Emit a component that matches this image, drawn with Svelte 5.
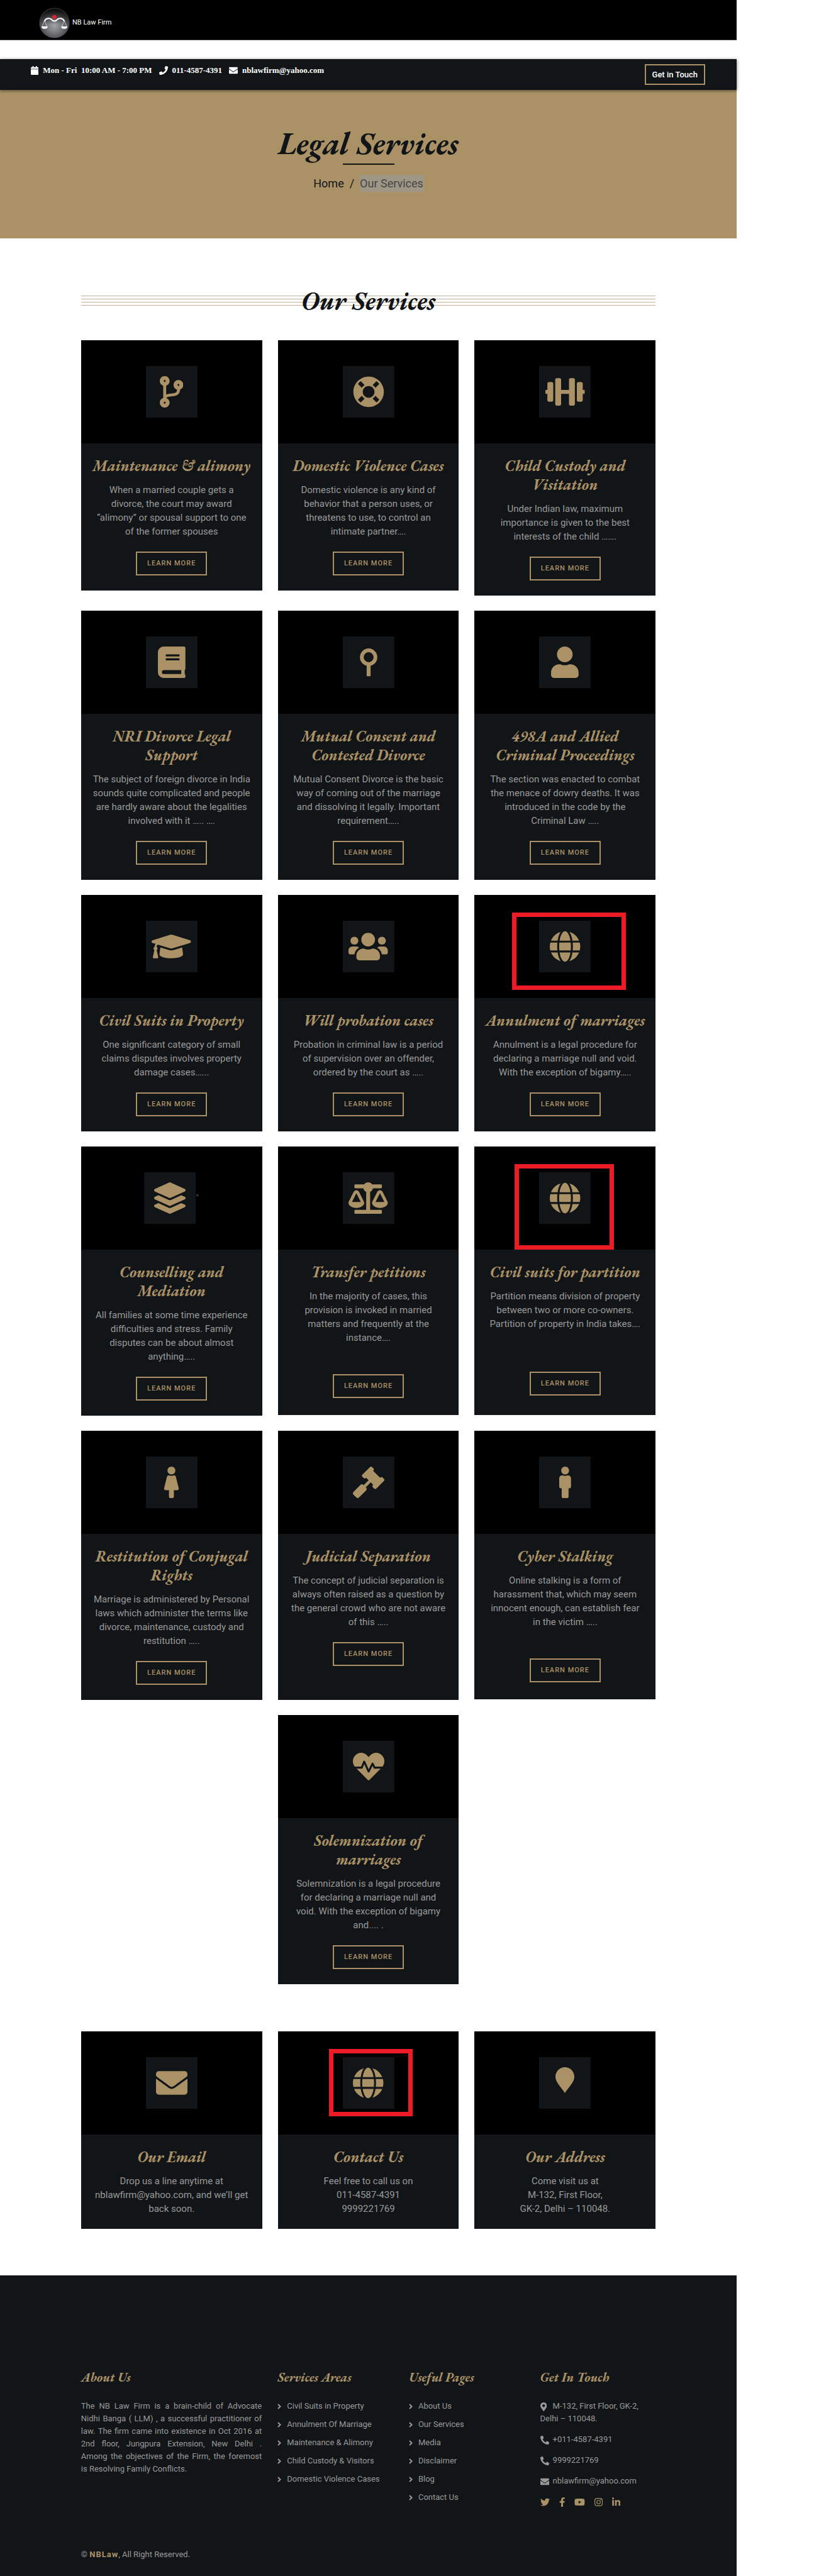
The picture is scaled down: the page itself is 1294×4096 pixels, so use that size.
<script>
  const icons = {
    branch: { w: 384, d: 'M384 144c0-44.2-35.8-80-80-80s-80 35.8-80 80c0 36.4 24.3 67.1 57.5 76.8-.6 16.1-4.2 28.5-11 36.9-15.4 19.2-49.3 22.4-85.2 25.7-28.2 2.6-57.4 5.4-81.3 16.9v-144c32.5-10.2 56-40.5 56-76.3 0-44.2-35.8-80-80-80S0 35.8 0 80c0 35.8 23.5 66.1 56 76.3v199.3C23.5 365.9 0 396.2 0 432c0 44.2 35.8 80 80 80s80-35.8 80-80c0-34-21.2-63.1-51.2-74.6 3.1-5.2 7.8-9.8 14.9-13.4 16.2-8.2 40.4-10.4 66.1-12.8 42.2-3.9 90-8.4 118.2-43.4 14-17.4 21.1-39.8 21.6-67.9 31.6-10.8 54.4-40.7 54.4-75.9zM80 64c8.8 0 16 7.2 16 16s-7.2 16-16 16-16-7.2-16-16 7.2-16 16-16zm0 384c-8.8 0-16-7.2-16-16s7.2-16 16-16 16 7.2 16 16-7.2 16-16 16zm224-320c8.8 0 16 7.2 16 16s-7.2 16-16 16-16-7.2-16-16 7.2-16 16-16z' },
    ring: { w: 512, d: 'M256 8C119.033 8 8 119.033 8 256s111.033 248 248 248 248-111.033 248-248S392.967 8 256 8zm173.696 119.559l-63.399 63.399c-10.987-18.559-26.67-34.252-45.255-45.255l63.399-63.399a218.396 218.396 0 0 1 45.255 45.255zM256 352c-53.019 0-96-42.981-96-96s42.981-96 96-96 96 42.981 96 96-42.981 96-96 96zM127.559 82.304l63.399 63.399c-18.559 10.987-34.252 26.67-45.255 45.255l-63.399-63.399a218.372 218.372 0 0 1 45.255-45.255zM82.304 384.441l63.399-63.399c10.987 18.559 26.67 34.252 45.255 45.255l-63.399 63.399a218.396 218.396 0 0 1-45.255-45.255zm302.137 45.255l-63.399-63.399c18.559-10.987 34.252-26.67 45.255-45.255l63.399 63.399a218.403 218.403 0 0 1-45.255 45.255z' },
    dumbbell: { w: 640, d: 'M104 96H56c-13.3 0-24 10.7-24 24v104H8c-4.4 0-8 3.6-8 8v48c0 4.4 3.6 8 8 8h24v104c0 13.3 10.7 24 24 24h48c13.3 0 24-10.7 24-24V120c0-13.3-10.7-24-24-24zm528 128h-24V120c0-13.3-10.7-24-24-24h-48c-13.3 0-24 10.7-24 24v272c0 13.3 10.7 24 24 24h48c13.3 0 24-10.7 24-24V288h24c4.4 0 8-3.6 8-8v-48c0-4.4-3.6-8-8-8zM456 32h-48c-13.3 0-24 10.7-24 24v168H256V56c0-13.3-10.7-24-24-24h-48c-13.3 0-24 10.7-24 24v400c0 13.3 10.7 24 24 24h48c13.3 0 24-10.7 24-24V288h128v168c0 13.3 10.7 24 24 24h48c13.3 0 24-10.7 24-24V56c0-13.3-10.7-24-24-24z' },
    book: { w: 448, d: 'M448 360V24c0-13.3-10.7-24-24-24H96C43 0 0 43 0 96v320c0 53 43 96 96 96h328c13.3 0 24-10.7 24-24v-16c0-7.5-3.5-14.3-8.9-18.7-4.2-15.4-4.2-59.3 0-74.7 5.4-4.3 8.9-11.1 8.9-18.6zM128 134c0-3.3 2.7-6 6-6h212c3.3 0 6 2.7 6 6v20c0 3.3-2.7 6-6 6H134c-3.3 0-6-2.7-6-6v-20zm0 64c0-3.3 2.7-6 6-6h212c3.3 0 6 2.7 6 6v20c0 3.3-2.7 6-6 6H134c-3.3 0-6-2.7-6-6v-20zm253.4 250H96c-17.7 0-32-14.3-32-32 0-17.6 14.4-32 32-32h285.4c-1.9 17.1-1.9 46.9 0 64z' },
    pin: { w: 512, d: 'M256 31a143 143 0 0 0-32 282v162q0 8 8 8h48q8 0 8-8V313a143 143 0 0 0-32-282zm0 62a81 81 0 1 1 0 162 81 81 0 0 1 0-162z' },
    user: { w: 448, d: 'M224 256c70.7 0 128-57.3 128-128S294.7 0 224 0 96 57.3 96 128s57.3 128 128 128zm89.6 32h-16.7c-22.2 10.2-46.9 16-72.9 16s-50.6-5.8-72.9-16h-16.7C60.2 288 0 348.2 0 422.4V464c0 26.5 21.5 48 48 48h352c26.5 0 48-21.5 48-48v-41.6c0-74.2-60.2-134.4-134.4-134.4z' },
    cap: { w: 640, d: 'M622.34 153.2L343.4 67.5c-15.2-4.67-31.6-4.67-46.79 0L17.66 153.2c-23.54 7.23-23.54 38.36 0 45.59l48.63 14.94c-10.67 13.19-17.23 29.28-17.88 46.9C38.78 266.15 32 276.11 32 288c0 10.78 5.68 19.85 13.86 25.65L20.33 428.53C18.11 438.52 25.71 448 35.94 448h56.11c10.24 0 17.84-9.48 15.62-19.47L82.14 313.65C90.32 307.85 96 298.78 96 288c0-11.57-6.47-21.25-15.66-26.87.76-15.02 8.44-28.3 20.69-36.72L296.6 284.5c9.06 2.78 26.44 6.25 46.79 0l278.95-85.7c23.55-7.24 23.55-38.36 0-45.6zM352.79 315.09c-28.53 8.76-52.84 3.92-65.59 0l-145.02-44.55L128 384c0 35.35 85.96 64 192 64s192-28.65 192-64l-14.18-113.47-145.03 44.56z' },
    users: { w: 640, d: 'M96 224c35.3 0 64-28.7 64-64s-28.7-64-64-64-64 28.7-64 64 28.7 64 64 64zm448 0c35.3 0 64-28.7 64-64s-28.7-64-64-64-64 28.7-64 64 28.7 64 64 64zm32 32h-64c-17.6 0-33.5 7.1-45.1 18.6 40.3 22.1 68.9 62 75.1 109.4h66c17.7 0 32-14.3 32-32v-32c0-35.3-28.7-64-64-64zm-256 0c61.9 0 112-50.1 112-112S381.9 32 320 32 208 82.1 208 144s50.1 112 112 112zm76.8 32h-8.3c-20.8 10-43.9 16-68.5 16s-47.6-6-68.5-16h-8.3C179.6 288 128 339.6 128 403.2V432c0 26.5 21.5 48 48 48h288c26.5 0 48-21.5 48-48v-28.8c0-63.6-51.6-115.2-115.2-115.2zm-223.7-13.4C161.5 263.1 145.6 256 128 256H64c-35.3 0-64 28.7-64 64v32c0 17.7 14.3 32 32 32h65.9c6.3-47.4 34.9-87.3 75.2-109.4z' },
    globe: { w: 496, d: 'M336.5 160C322 70.7 287.8 8 248 8s-74 62.7-88.5 152h177zM152 256c0 22.2 1.2 43.5 3.3 64h185.3c2.1-20.5 3.3-41.8 3.3-64s-1.2-43.5-3.3-64H155.3c-2.1 20.5-3.3 41.8-3.3 64zm324.7-96c-28.6-67.9-86.5-120.4-158-141.6 24.4 33.8 41.2 84.7 50 141.6h108zM177.2 18.4C105.8 39.6 47.8 92.1 19.3 160h108c8.7-56.9 25.5-107.8 49.9-141.6zM487.4 192H372.7c2.1 21 3.3 42.5 3.3 64s-1.2 43-3.3 64h114.6c5.5-20.5 8.6-41.8 8.6-64s-3.1-43.5-8.5-64zM120 256c0-21.5 1.2-43 3.3-64H8.6C3.2 212.5 0 233.8 0 256s3.2 43.5 8.6 64h114.6c-2-21-3.2-42.5-3.2-64zm39.5 96c14.5 89.3 48.7 152 88.5 152s74-62.7 88.5-152h-177zm159.3 141.6c71.4-21.2 129.4-73.7 158-141.6h-108c-8.8 56.9-25.6 107.8-50 141.6zM19.3 352c28.6 67.9 86.5 120.4 158 141.6-24.4-33.8-41.2-84.7-50-141.6h-108z' },
    layers: { w: 512, d: 'M12.41 148.02l232.94 105.67c6.8 3.09 14.49 3.09 21.29 0l232.94-105.67c16.55-7.51 16.55-32.52 0-40.03L266.65 2.31a25.607 25.607 0 0 0-21.29 0L12.41 107.98c-16.55 7.51-16.55 32.53 0 40.04zm487.18 88.28l-58.09-26.33-161.64 73.27c-7.56 3.43-15.59 5.17-23.86 5.17s-16.29-1.74-23.86-5.17L70.51 209.97l-58.1 26.33c-16.55 7.5-16.55 32.5 0 40l232.94 105.59c6.8 3.08 14.49 3.08 21.29 0L499.59 276.3c16.55-7.5 16.55-32.5 0-40zm0 127.8l-57.87-26.23-161.86 73.37c-7.56 3.43-15.59 5.17-23.86 5.17s-16.29-1.74-23.86-5.17L70.29 337.87 12.41 364.1c-16.55 7.5-16.55 32.5 0 40l232.94 105.59c6.8 3.08 14.49 3.08 21.29 0L499.59 404.1c16.55-7.5 16.55-32.5 0-40z' },
    scale: { w: 640, d: 'M256 336h-.02c0-16.18 1.34-8.73-85.05-181.51-17.65-35.29-68.19-35.36-85.87 0C-2.06 328.75.02 320.33.02 336H0c0 44.18 57.31 80 128 80s128-35.82 128-80zM128 176l72 144H56l72-144zm511.98 160c0-16.18 1.34-8.73-85.05-181.51-17.65-35.29-68.19-35.36-85.87 0-87.12 174.26-85.04 165.84-85.04 181.51H384c0 44.18 57.31 80 128 80s128-35.82 128-80h-.02zM440 320l72-144 72 144H440zm88 128H352V153.25c23.51-10.29 41.16-31.48 46.39-57.25H528c8.84 0 16-7.16 16-16V48c0-8.84-7.16-16-16-16H383.64C369.04 12.68 346.09 0 320 0s-49.04 12.68-63.64 32H112c-8.84 0-16 7.16-16 16v32c0 8.84 7.16 16 16 16h129.61c5.23 25.76 22.87 46.96 46.39 57.25V448H112c-8.84 0-16 7.16-16 16v32c0 8.84 7.16 16 16 16h416c8.84 0 16-7.16 16-16v-32c0-8.84-7.16-16-16-16z' },
    female: { w: 256, d: 'M128 0c35.346 0 64 28.654 64 64s-28.654 64-64 64c-35.346 0-64-28.654-64-64S92.654 0 128 0m119.283 354.179l-48-192A24 24 0 0 0 176 144h-11.36c-22.711 10.443-49.59 10.894-73.28 0H80a24 24 0 0 0-23.283 18.179l-48 192C4.935 369.305 16.383 384 32 384h56v104c0 13.255 10.745 24 24 24h32c13.255 0 24-10.745 24-24V384h56c15.591 0 27.071-14.671 23.283-29.821z' },
    gavel: { w: 512, d: 'M504.971 199.362l-22.627-22.627c-9.373-9.373-24.569-9.373-33.941 0l-5.657 5.657L329.608 69.255l5.657-5.657c9.373-9.373 9.373-24.569 0-33.941L312.638 7.029c-9.373-9.373-24.569-9.373-33.941 0L154.246 131.48c-9.373 9.373-9.373 24.569 0 33.941l22.627 22.627c9.373 9.373 24.569 9.373 33.941 0l5.657-5.657 39.598 39.598-81.04 81.04-5.657-5.657c-12.497-12.497-32.758-12.497-45.255 0L9.373 412.118c-12.497 12.497-12.497 32.758 0 45.255l45.255 45.255c12.497 12.497 32.758 12.497 45.255 0l114.745-114.745c12.497-12.497 12.497-32.758 0-45.255l-5.657-5.657 81.04-81.04 39.598 39.598-5.657 5.657c-9.373 9.373-9.373 24.569 0 33.941l22.627 22.627c9.373 9.373 24.569 9.373 33.941 0l124.451-124.451c9.372-9.372 9.372-24.568 0-33.941z' },
    male: { w: 192, d: 'M96 0c35.346 0 64 28.654 64 64s-28.654 64-64 64-64-28.654-64-64S60.654 0 96 0m48 144h-11.36c-22.711 10.443-49.59 10.894-73.28 0H48c-26.51 0-48 21.49-48 48v136c0 13.255 10.745 24 24 24h16v136c0 13.255 10.745 24 24 24h64c13.255 0 24-10.745 24-24V352h16c13.255 0 24-10.745 24-24V192c0-26.51-21.49-48-48-48z' },
    heart: { w: 512, d: 'M320.2 243.8l-49.7 99.4c-6 12.1-23.4 11.7-28.9-.6l-56.9-126.3-30 71.7H60.6l182.5 186.5c7.1 7.3 18.6 7.3 25.7 0L451.4 288H342.3l-22.1-44.2zM473.7 73.9l-2.4-2.5c-51.5-52.6-135.8-52.6-187.4 0L256 100l-27.9-28.5c-51.5-52.7-135.9-52.7-187.4 0l-2.4 2.4C-10.4 123.7-12.5 203 31 256h102.4l35.9-86.2c5.4-12.9 23.6-13.1 29.2-.4l58.2 129.3 49-97.9c5.9-11.8 22.7-11.8 28.6 0l27.6 55.2H481c43.5-53 41.4-132.3-7.3-182.1z' },
    envelope: { w: 512, d: 'M502.3 190.8c3.9-3.1 9.7-.2 9.7 4.7V400c0 26.5-21.5 48-48 48H48c-26.5 0-48-21.5-48-48V195.6c0-5 5.7-7.8 9.7-4.7 22.4 17.4 52.1 39.5 154.1 113.6 21.1 15.4 56.7 47.8 92.2 47.6 35.7.3 72-32.8 92.3-47.6 102-74.1 131.6-96.3 154-113.7zM256 320c23.2.4 56.6-29.2 73.4-41.4 132.7-96.3 142.8-104.7 173.4-128.7 5.8-4.5 9.2-11.5 9.2-18.9v-19c0-26.5-21.5-48-48-48H48c-26.5 0-48 21.5-48 48v19c0 7.4 3.4 14.3 9.2 18.9 30.6 23.9 40.7 32.4 173.4 128.7 16.8 12.2 50.2 41.8 73.4 41.4z' },
    drop: { w: 512, d: 'M256 0C170 0 102 70 102 158c0 84 92 164 154 262 62-98 154-178 154-262C410 70 342 0 256 0z' },
    calendar: { w: 448, d: 'M12 192h424c6.6 0 12 5.4 12 12v260c0 26.5-21.5 48-48 48H48c-26.5 0-48-21.5-48-48V204c0-6.6 5.4-12 12-12zm436-44v-36c0-26.5-21.5-48-48-48h-48V12c0-6.6-5.4-12-12-12h-40c-6.6 0-12 5.4-12 12v52H160V12c0-6.6-5.4-12-12-12h-40c-6.6 0-12 5.4-12 12v52H48C21.5 64 0 85.5 0 112v36c0 6.6 5.4 12 12 12h424c6.6 0 12-5.4 12-12z' },
    phone: { w: 512, d: 'M493.4 24.6l-104-24c-11.3-2.6-22.9 3.3-27.5 13.9l-48 112c-4.2 9.8-1.4 21.3 6.9 28l60.6 49.6c-36 76.7-98.9 140.5-177.2 177.2l-49.6-60.6c-6.8-8.3-18.2-11.1-28-6.9l-112 48C3.9 366.5-2 378.1.6 389.4l24 104C27.1 504.2 36.7 512 48 512c256.1 0 464-207.5 464-464 0-11.2-7.7-20.9-18.6-23.4z' },
    phoneAlt: { w: 512, d: 'M18.6 24.6l104-24c11.3-2.6 22.9 3.3 27.5 13.9l48 112c4.2 9.8 1.4 21.3-6.9 28l-60.6 49.6c36 76.7 98.9 140.5 177.2 177.2l49.6-60.6c6.8-8.3 18.2-11.1 28-6.9l112 48c10.7 4.7 16.6 16.3 14 27.6l-24 104C484.9 504.2 475.3 512 464 512 207.9 512 0 304.5 0 48 0 36.8 7.7 27.1 18.6 24.6z' },
    marker: { w: 384, d: 'M172.268 501.67C26.97 291.031 0 269.413 0 192 0 85.961 85.961 0 192 0s192 85.961 192 192c0 77.413-26.97 99.031-172.268 309.67-9.535 13.774-29.93 13.773-39.464 0zM192 272c44.183 0 80-35.817 80-80s-35.817-80-80-80-80 35.817-80 80 35.817 80 80 80z' },
    twitter: { w: 512, d: 'M459.37 151.716c.325 4.548.325 9.097.325 13.645 0 138.72-105.583 298.558-298.558 298.558-59.452 0-114.68-17.219-161.137-47.106 8.447.974 16.568 1.299 25.34 1.299 49.055 0 94.213-16.568 130.274-44.832-46.132-.975-84.792-31.188-98.112-72.772 6.498.974 12.995 1.624 19.818 1.624 9.421 0 18.843-1.3 27.614-3.573-48.081-9.747-84.143-51.98-84.143-102.985v-1.299c13.969 7.797 30.214 12.67 47.431 13.319-28.264-18.843-46.781-51.005-46.781-87.391 0-19.492 5.197-37.36 14.294-52.954 51.655 63.675 129.3 105.258 216.365 109.807-1.624-7.797-2.599-15.918-2.599-24.04 0-57.828 46.782-104.934 104.934-104.934 30.213 0 57.502 12.67 76.67 33.137 23.715-4.548 46.456-13.32 66.599-25.34-7.798 24.366-24.366 44.833-46.132 57.827 21.117-2.273 41.584-8.122 60.426-16.243-14.292 20.791-32.161 39.308-52.628 54.253z' },
    facebook: { w: 320, d: 'M279.14 288l14.22-92.66h-88.91v-60.13c0-25.35 12.42-50.06 52.24-50.06h40.42V6.26S260.43 0 225.36 0c-73.22 0-121.08 44.38-121.08 124.72v70.62H22.89V288h81.39v224h100.17V288z' },
    youtube: { w: 576, d: 'M549.655 124.083c-6.281-23.65-24.787-42.276-48.284-48.597C458.781 64 288 64 288 64S117.22 64 74.629 75.486c-23.497 6.322-42.003 24.947-48.284 48.597-11.412 42.867-11.412 132.305-11.412 132.305s0 89.438 11.412 132.305c6.281 23.65 24.787 41.5 48.284 47.821C117.22 448 288 448 288 448s170.78 0 213.371-11.486c23.497-6.321 42.003-24.171 48.284-47.821 11.412-42.867 11.412-132.305 11.412-132.305s0-89.438-11.412-132.305zm-317.51 213.508V175.185l142.739 81.205-142.739 81.201z' },
    instagram: { w: 448, d: 'M130 32h188c72 0 130 58 130 130v188c0 72-58 130-130 130H130C58 480 0 422 0 350V162C0 90 58 32 130 32zm4 42c-52 0-92 40-92 92v180c0 52 40 92 92 92h180c52 0 92-40 92-92V166c0-52-40-92-92-92zm90 67a115 115 0 1 1 0 230 115 115 0 0 1 0-230zm0 40a75 75 0 1 0 0 150 75 75 0 0 0 0-150zm120-72a27 27 0 1 1 0 54 27 27 0 0 1 0-54z' },
    linkedin: { w: 448, d: 'M100.28 448H7.4V148.9h92.88zM53.79 108.1C24.09 108.1 0 83.5 0 53.8a53.79 53.79 0 0 1 107.58 0c0 29.7-24.1 54.3-53.79 54.3zM447.9 448h-92.68V302.4c0-34.7-.7-79.2-48.29-79.2-48.29 0-55.69 37.7-55.69 76.7V448h-92.78V148.9h89.08v40.8h1.3c12.4-23.5 42.69-48.3 87.88-48.3 94 0 111.28 61.9 111.28 142.3V448z' }
  };

  const services = [
    { icon: 'branch', title: 'Maintenance & alimony', text: 'When a married couple gets a\ndivorce, the court may award\n“alimony” or spousal support to one\nof the former spouses' },
    { icon: 'ring', title: 'Domestic Violence Cases', text: 'Domestic violence is any kind of\nbehavior that a person uses, or\nthreatens to use, to control an\nintimate partner….' },
    { icon: 'dumbbell', title: 'Child Custody and\nVisitation', text: 'Under Indian law, maximum\nimportance is given to the best\ninterests of the child …….' },
    { icon: 'book', title: 'NRI Divorce Legal\nSupport', text: 'The subject of foreign divorce in India\nsounds quite complicated and people\nare hardly aware about the legalities\ninvolved with it ….. ….' },
    { icon: 'pin', title: 'Mutual Consent and\nContested Divorce', text: 'Mutual Consent Divorce is the basic\nway of coming out of the marriage\nand dissolving it legally. Important\nrequirement…..' },
    { icon: 'user', title: '498A and Allied\nCriminal Proceedings', text: 'The section was enacted to combat\nthe menace of dowry deaths. It was\nintroduced in the code by the\nCriminal Law …..' },
    { icon: 'cap', title: 'Civil Suits in Property', text: 'One significant category of small\nclaims disputes involves property\ndamage cases…...' },
    { icon: 'users', title: 'Will probation cases', text: 'Probation in criminal law is a period\nof supervision over an offender,\nordered by the court as …..' },
    { icon: 'globe', title: 'Annulment of marriages', text: 'Annulment is a legal procedure for\ndeclaring a marriage null and void.\nWith the exception of bigamy…..', mark: 'wide' },
    { icon: 'layers', title: 'Counselling and\nMediation', text: 'All families at some time experience\ndifficulties and stress. Family\ndisputes can be about almost\nanything…..', after: '"' },
    { icon: 'scale', title: 'Transfer petitions', text: 'In the majority of cases, this\nprovision is invoked in married\nmatters and frequently at the\ninstance….', space: 'drop-1' },
    { icon: 'globe', title: 'Civil suits for partition', text: 'Partition means division of property\nbetween two or more co-owners.\nPartition of property in India takes….', space: 'drop-2', mark: 'tall' },
    { icon: 'female', title: 'Restitution of Conjugal\nRights', text: 'Marriage is administered by Personal\nlaws which administer the terms like\ndivorce, maintenance, custody and\nrestitution …..' },
    { icon: 'gavel', title: 'Judicial Separation', text: 'The concept of judicial separation is\nalways often raised as a question by\nthe general crowd who are not aware\nof this …..', space: 'deep' },
    { icon: 'male', title: 'Cyber Stalking', text: 'Online stalking is a form of\nharassment that, which may seem\ninnocent enough, can establish fear\nin the victim …..', space: 'drop-1' },
    { icon: 'heart', title: 'Solemnization of\nmarriages', text: 'Solemnization is a legal procedure\nfor declaring a marriage null and\nvoid. With the exception of bigamy\nand.... .', space: 'middle' }
  ];

  const contacts = [
    { icon: 'envelope', title: 'Our Email', text: 'Drop us a line anytime at\nnblawfirm@yahoo.com, and we’ll get\nback soon.' },
    { icon: 'globe', title: 'Contact Us', text: 'Feel free to call us on\n011-4587-4391\n9999221769', mark: 'small' },
    { icon: 'drop', title: 'Our Address', text: 'Come visit us at\nM-132, First Floor,\nGK-2, Delhi – 110048.' }
  ];

  const about = [
    'The NB Law Firm is a brain-child of Advocate',
    'Nidhi Banga ( LLM) , a successful practitioner of',
    'law. The firm came into existence in Oct 2016 at',
    '2nd floor, Jungpura Extension, New Delhi .',
    'Among the objectives of the Firm, the foremost',
    'is Resolving Family Conflicts.'
  ];
  const areas = ['Civil Suits in Property', 'Annulment Of Marriage', 'Maintenance & Alimony', 'Child Custody & Visitors', 'Domestic Violence Cases'];
  const pages = ['About Us', 'Our Services', 'Media', 'Disclaimer', 'Blog', 'Contact Us'];
  const social = ['twitter', 'facebook', 'youtube', 'instagram', 'linkedin'];
</script>

{#snippet icon(name)}
  <svg class="icon" viewBox="0 0 {icons[name].w} 512" aria-hidden="true"><path d={icons[name].d} fill-rule={name === 'instagram' || name === 'pin' ? 'evenodd' : 'nonzero'} /></svg>
{/snippet}

{#snippet card(item, button)}
  <article class="card {item.space ?? ''}">
    <div class="cover">
      <div class="tile">{@render icon(item.icon)}</div>
      {#if item.after}<span class="after">{item.after}</span>{/if}
      {#if item.mark}<div class="mark {item.mark}"></div>{/if}
    </div>
    <div class="body">
      <h3>{item.title}</h3>
      <p>{item.text}</p>
      {#if button}<a class="more" href="#more">LEARN MORE</a>{/if}
    </div>
  </article>
{/snippet}

{#snippet links(items)}
  <ul>
    {#each items as item}
      <li>
        <a href="#page">
          <svg class="chevron" viewBox="0 0 6 9" aria-hidden="true"><path d="M1 1l3.6 3.5L1 8" /></svg>{item}
        </a>
      </li>
    {/each}
  </ul>
{/snippet}

<div class="page">
  <header class="brand">
    <svg class="logo" viewBox="0 0 50 50" role="img" aria-label="NB Law Firm logo">
      <defs>
        <radialGradient id="orb" cx="50%" cy="58%" r="55%">
          <stop offset="0" stop-color="#a3a4a8" />
          <stop offset="0.45" stop-color="#77787b" />
          <stop offset="1" stop-color="#37383a" />
        </radialGradient>
        <linearGradient id="shade" x1="0" y1="0" x2="0" y2="1">
          <stop offset="0" stop-color="#000" stop-opacity="0.85" />
          <stop offset="0.55" stop-color="#000" stop-opacity="0" />
        </linearGradient>
      </defs>
      <circle cx="25" cy="25" r="24.5" fill="url(#orb)" />
      <circle cx="25" cy="25" r="23.5" fill="url(#shade)" />
      <path d="M9 22c2-5 9-6 12-2 2 2.500 6 2.500 8 0 3-4 10-3 12 2" fill="none" stroke="#fff" stroke-width="2" stroke-linecap="round" />
      <path d="M9 21l-4 10M9 21l4 10M41 21l-4 10M41 21l4 10" stroke="#ddd" stroke-width="0.8" />
      <path d="M4 30.500h10c0 2.500-2 4-5 4s-5-1.500-5-4zM36 30.500h10c0 2.500-2 4-5 4s-5-1.500-5-4z" fill="#fff" />
      <circle cx="25" cy="15.500" r="3.400" fill="#d8222e" />
    </svg>
    <span>NB Law Firm</span>
  </header>

  <div class="topbar">
    <div class="facts">
      <span>{@render icon('calendar')}Mon - Fri&nbsp; 10:00 AM - 7:00 PM</span>
      <span>{@render icon('phone')}011-4587-4391</span>
      <span>{@render icon('envelope')}nblawfirm@yahoo.com</span>
    </div>
    <a class="touch" href="#contact">Get in Touch</a>
  </div>

  <section class="banner">
    <h1>Legal Services</h1>
    <nav><a href="#home">Home</a><span>/</span><a class="current" href="#services">Our Services</a></nav>
  </section>

  <main>
    <h2><span>Our Services</span></h2>
    <div class="grid">
      {#each services as item}{@render card(item, true)}{/each}
    </div>
    <div class="grid contact">
      {#each contacts as item}{@render card(item, false)}{/each}
    </div>
  </main>

  <footer>
    <div class="columns">
      <section>
        <h4>About Us</h4>
        <p class="about">{#each about as line}<span>{line} </span>{/each}</p>
      </section>
      <section>
        <h4>Services Areas</h4>
        {@render links(areas)}
      </section>
      <section>
        <h4>Useful Pages</h4>
        {@render links(pages)}
      </section>
      <section class="reach">
        <h4>Get In Touch</h4>
        <p><i>{@render icon('marker')}</i>M-132, First Floor, GK-2,<br />Delhi – 110048.</p>
        <p><i>{@render icon('phoneAlt')}</i>+011-4587-4391</p>
        <p><i>{@render icon('phoneAlt')}</i>9999221769</p>
        <p><i>{@render icon('envelope')}</i>nblawfirm@yahoo.com</p>
        <div class="social">
          {#each social as name}<a href="#social" aria-label={name}>{@render icon(name)}</a>{/each}
        </div>
      </section>
    </div>
    <p class="copy">© <a href="#home">NBLaw</a>, All Right Reserved.</p>
  </footer>
</div>

<style>
  :global(body) {
    margin: 0;
    background: #fff;
  }

  .page {
    --gold: #aa9166;
    --dark: #121518;
    --edge: 11%;
    width: 90.5%;
    font-family: Roboto, 'Liberation Sans', sans-serif;
    font-size: 15px;
    line-height: 22px;
    color: #999;
  }

  .page * {
    box-sizing: border-box;
  }

  h1, h2, h3, h4, p, ul {
    margin: 0;
    padding: 0;
  }

  h1, h2, h3, h4 {
    font-family: 'EB Garamond', 'Liberation Serif', serif;
    font-style: italic;
    font-weight: 700;
  }

  a {
    color: inherit;
    text-decoration: none;
  }

  .icon {
    display: block;
    height: 1em;
    width: auto;
    fill: currentColor;
    flex: none;
  }

  .brand {
    display: flex;
    align-items: center;
    gap: 4px;
    height: 64px;
    padding: 10px 62px 0;
    background: #000;
    border-bottom: 1px solid #444;
    color: #fff;
    font-size: 11px;
  }

  .brand span {
    padding-bottom: 2px;
  }

  .logo {
    width: 49px;
    height: 49px;
  }

  .topbar {
    position: relative;
    display: flex;
    justify-content: space-between;
    align-items: flex-start;
    margin-top: 30px;
    height: 49px;
    padding: 8px 50px 0 49px;
    background: var(--dark);
    box-shadow: 0 1px 5px rgba(0, 0, 0, 0.55);
    color: #fff;
  }

  .facts {
    display: flex;
    gap: 11px;
    font: 700 13px/20px 'Liberation Serif', serif;
  }

  .facts span {
    display: flex;
    align-items: center;
    gap: 7px;
  }

  .facts .icon {
    height: 14px;
  }

  .touch {
    height: 33px;
    padding: 0 10px;
    border: 2px solid var(--gold);
    font-size: 13px;
    font-weight: 500;
    line-height: 29px;
  }

  .banner {
    padding: 56px 20px 74px;
    background: var(--gold);
    color: var(--dark);
    text-align: center;
  }

  h1 {
    font-size: 50px;
    line-height: 58px;
  }

  h1::after {
    content: '';
    display: block;
    width: 82px;
    height: 2px;
    margin: 3px auto 0;
    background: var(--dark);
  }

  nav {
    display: flex;
    justify-content: center;
    gap: 9px;
    margin-top: 16px;
    font-size: 18px;
    line-height: 27px;
  }

  .current {
    background: #9f9786;
    color: #454545;
  }

  main {
    padding: 75px var(--edge) 74px;
  }

  h2 {
    position: relative;
    color: var(--dark);
    font-size: 41px;
    line-height: 48px;
    text-align: center;
  }

  h2::before {
    content: '';
    position: absolute;
    inset: 16px 0 auto;
    height: 16px;
    background: repeating-linear-gradient(#c0b198 0 1px, transparent 1px 5px);
  }

  h2 span {
    position: relative;
  }

  .grid {
    display: grid;
    grid-template-columns: repeat(3, 1fr);
    gap: 24px 25px;
    align-items: start;
    margin-top: 39px;
  }

  .contact {
    margin-top: 75px;
  }

  .card {
    background: var(--dark);
    text-align: center;
  }

  .middle {
    grid-column: 2;
  }

  .cover {
    position: relative;
    display: flex;
    justify-content: center;
    align-items: center;
    padding: 41px 0;
    background: #000;
  }

  .tile {
    display: flex;
    justify-content: center;
    align-items: center;
    width: 82px;
    height: 82px;
    background: var(--dark);
    color: var(--gold);
    font-size: 50px;
  }

  .after {
    color: #555;
  }

  .mark {
    position: absolute;
    top: 28px;
    border: 7px solid #ed1c24;
  }

  .wide {
    left: 60px;
    width: 181px;
    height: 123px;
  }

  .tall {
    left: 64px;
    width: 158px;
    height: 136px;
  }

  .small {
    left: 81px;
    width: 133px;
    height: 107px;
  }

  .body {
    display: flex;
    flex-direction: column;
    align-items: center;
    padding: 21px 10px 24px;
    white-space: pre-line;
  }

  .contact .body {
    padding-bottom: 21px;
  }

  h3 {
    margin-bottom: 12px;
    color: var(--gold);
    font-size: 24px;
    line-height: 30px;
  }

  .more {
    height: 38px;
    margin-top: 21px;
    padding: 0 16px;
    border: 2px solid var(--gold);
    color: var(--gold);
    font-size: 11px;
    font-weight: 500;
    letter-spacing: 1px;
    line-height: 34px;
  }

  .drop-1 .more {
    margin-top: 47px;
  }

  .drop-1 .body {
    padding-bottom: 27px;
  }

  .drop-2 .more {
    margin-top: 65px;
  }

  .drop-2 .body {
    padding-bottom: 31px;
  }

  .deep .body {
    padding-bottom: 54px;
  }

  footer {
    padding: 150px var(--edge) 24px;
    background: var(--dark);
    font-size: 13px;
    line-height: 20px;
  }

  .columns {
    display: grid;
    grid-template-columns: 288fr 184fr 184fr 184fr;
    gap: 25px;
  }

  h4 {
    margin-bottom: 24px;
    color: var(--gold);
    font-size: 20px;
    line-height: 24px;
  }

  .about span {
    display: block;
    text-align: justify;
    text-align-last: justify;
  }

  .about span:last-child {
    text-align-last: left;
  }

  ul {
    display: grid;
    gap: 9px;
    list-style: none;
  }

  li a {
    display: flex;
    align-items: center;
    gap: 9px;
  }

  .chevron {
    width: 6px;
    height: 9px;
    fill: none;
    stroke: currentColor;
    stroke-width: 2;
  }

  .reach p {
    margin-bottom: 13px;
  }

  .reach i {
    display: inline-block;
    width: 20px;
    vertical-align: middle;
  }

  .reach i .icon {
    height: 14px;
  }

  .social {
    display: flex;
    align-items: center;
    gap: 15px;
    height: 20px;
    color: var(--gold);
    font-size: 15px;
  }

  .copy {
    margin-top: 64px;
  }

  .copy a {
    color: var(--gold);
    font-weight: 700;
    letter-spacing: 1px;
  }
</style>
